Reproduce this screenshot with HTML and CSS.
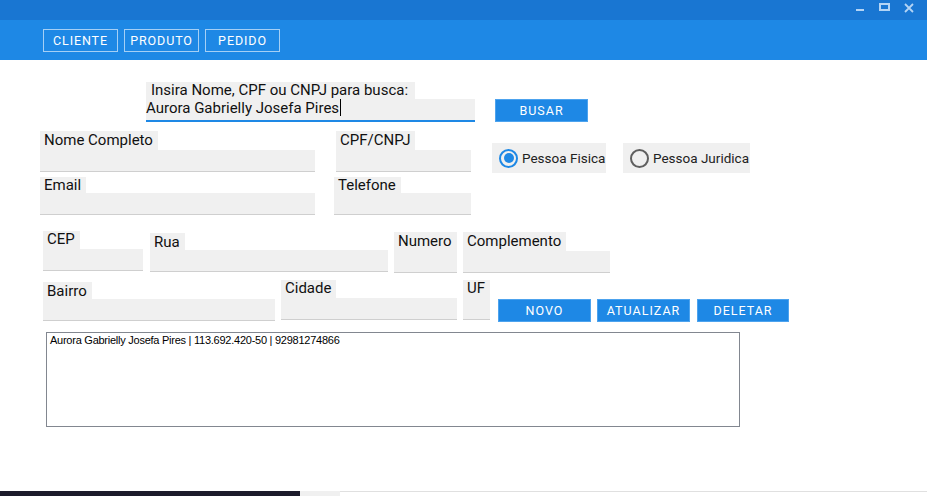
FILE: index.html
```html
<!DOCTYPE html>
<html lang="pt-BR">
<head>
<meta charset="utf-8">
<title>Cadastro de Cliente</title>
<link rel="stylesheet" href="styles.css">
</head>
<body>
<div class="window">
  <div class="titlebar">
    <span class="wc wc-min"></span>
    <span class="wc wc-max"></span>
    <svg class="wc-close" width="10" height="10" viewBox="0 0 10 10"><path d="M1 1L9 9M9 1L1 9" stroke="#b3d4f5" stroke-width="1.8" fill="none"/></svg>
  </div>
  <nav class="navbar">
    <span class="navbtn">CLIENTE</span>
    <span class="navbtn">PRODUTO</span>
    <span class="navbtn">PEDIDO</span>
  </nav>
  <main class="content">
    <div class="row row-search">
      <div class="search">
        <span class="search-lbl">Insira Nome, CPF ou CNPJ para busca:</span>
        <div class="search-input">Aurora Gabrielly Josefa Pires<span class="caret"></span></div>
      </div>
      <button class="btn btn-busar">BUSAR</button>
    </div>

    <div class="row row2">
      <div class="field w-nome"><span class="lbl h19">Nome Completo</span><div class="box"></div></div>
      <div class="field w-cpf ml21"><span class="lbl h19">CPF/CNPJ</span><div class="box"></div></div>
      <label class="radio w-fis ml21"><span class="dot on"></span>Pessoa Fisica</label>
      <label class="radio w-jur ml17"><span class="dot"></span>Pessoa Juridica</label>
    </div>

    <div class="row row3">
      <div class="field w-nome"><span class="lbl h16">Email</span><div class="box"></div></div>
      <div class="field w-tel ml19"><span class="lbl h16">Telefone</span><div class="box"></div></div>
    </div>

    <div class="row row4">
      <div class="field w-cep"><span class="lbl h18">CEP</span><div class="box"></div></div>
      <div class="field w-rua ml7 mt2"><span class="lbl h17">Rua</span><div class="box"></div></div>
      <div class="field w-num ml6 mt1"><span class="lbl h19 full">Numero</span><div class="box"></div></div>
      <div class="field w-comp ml6 mt1"><span class="lbl h19">Complemento</span><div class="box"></div></div>
    </div>

    <div class="row row5">
      <div class="field w-bairro mt2"><span class="lbl h17">Bairro</span><div class="box"></div></div>
      <div class="field w-cid ml6"><span class="lbl h18">Cidade</span><div class="box"></div></div>
      <div class="field w-uf ml6"><span class="lbl h18 full">UF</span><div class="box h22"></div></div>
      <button class="btn w-novo ml8 mt19">NOVO</button>
      <button class="btn w-novo ml6 mt19">ATUALIZAR</button>
      <button class="btn w-del ml7 mt19">DELETAR</button>
    </div>

    <div class="listbox">
      <div class="item">Aurora Gabrielly Josefa Pires | 113.692.420-50 | 92981274866</div>
    </div>
  </main>
  <div class="taskbar">
    <span class="tb-dark"></span>
    <span class="tb-mid"></span>
    <span class="tb-rest"></span>
  </div>
</div>
</body>
</html>
```
FILE: styles.css
```css
* { box-sizing: border-box; }
html, body { margin: 0; padding: 0; }
body {
  width: 927px;
  height: 496px;
  overflow: hidden;
  background: #ffffff;
  font-family: Roboto, "Liberation Sans", sans-serif;
  color: #111;
}
.window { width: 927px; height: 496px; display: flex; flex-direction: column; }

.titlebar {
  height: 20px;
  background: #1976d2;
  display: flex;
  align-items: flex-start;
  justify-content: flex-end;
  padding-right: 13px;
}
.wc { display: block; }
.wc-min { width: 8px; height: 2px; background: #b3d4f5; margin-top: 9px; }
.wc-max { width: 11px; height: 8px; border: 2px solid #b3d4f5; margin-top: 3px; margin-left: 15px; }
.wc-close { margin-top: 3px; margin-left: 14px; }

.navbar {
  height: 40px;
  background: #1e88e5;
  display: flex;
  align-items: flex-start;
  padding: 9px 0 0 43px;
  gap: 6px;
}
.navbtn {
  width: 75px;
  height: 23px;
  border: 1px solid rgba(255,255,255,0.6);
  color: #fff;
  font-size: 12.5px;
  font-weight: 400;
  letter-spacing: 0.9px;
  display: flex;
  align-items: center;
  justify-content: center;
}

.content { flex: 1; position: relative; }

.row { display: flex; align-items: flex-start; }
.row-search { padding-left: 146px; margin-top: 22px; align-items: flex-end; }
.search { width: 329px; display: flex; flex-direction: column; align-items: flex-start; }
.search-lbl {
  background: #f0f0f0;
  width: 269px;
  height: 17px;
  line-height: 17px;
  padding-left: 5px;
  font-size: 15px;
  white-space: nowrap;
}
.search-input {
  width: 329px;
  height: 23px;
  background: #f0f0f0;
  border-bottom: 2px solid #1e88e5;
  font-size: 15px;
  line-height: 19px;
  white-space: nowrap;
}
.caret { display: inline-block; width: 1px; height: 17px; background: #000; vertical-align: -3px; margin-left: 1px; }

.btn {
  height: 23px;
  background: #1e88e5;
  border: 1px solid #4da3ee;
  color: #fff;
  font-family: Roboto, "Liberation Sans", sans-serif;
  font-size: 12.5px;
  font-weight: 400;
  letter-spacing: 1px;
  padding: 0;
  display: flex;
  align-items: center;
  justify-content: center;
}
.btn-busar { width: 93px; margin-left: 20px; }
.w-novo { width: 93px; }
.w-del { width: 92px; }

.row2 { padding-left: 40px; margin-top: 9px; height: 46px; }
.row3 { padding-left: 40px; }
.row4 { padding-left: 43px; margin-top: 16px; height: 49px; }
.row5 { padding-left: 43px; }

.field { display: flex; flex-direction: column; align-items: flex-start; }
.lbl {
  display: block;
  background: #f0f0f0;
  font-size: 15px;
  padding: 0 5px 0 4px;
  white-space: nowrap;
}
.lbl.full { align-self: stretch; }
.h19 { height: 19px; line-height: 19px; }
.h18 { height: 18px; line-height: 17px; }
.h17 { height: 17px; line-height: 18px; }
.h16 { height: 16px; line-height: 16px; }
.box {
  align-self: stretch;
  height: 22px;
  background: #f0f0f0;
  border-bottom: 1px solid #cfcfcf;
}
.box.h22 { height: 22px; }

.w-nome { width: 275px; }
.w-cpf { width: 135px; }
.w-tel { width: 137px; }
.w-cep { width: 100px; }
.w-rua { width: 238px; }
.w-num { width: 63px; }
.w-comp { width: 147px; }
.w-bairro { width: 232px; }
.w-cid { width: 176px; }
.w-uf { width: 27px; }
.w-fis { width: 114px; }
.w-jur { width: 127px; }

.ml6 { margin-left: 6px; }
.ml7 { margin-left: 7px; }
.ml8 { margin-left: 8px; }
.ml17 { margin-left: 17px; }
.ml19 { margin-left: 19px; }
.ml21 { margin-left: 21px; }
.mt1 { margin-top: 1px; }
.mt2 { margin-top: 2px; }
.mt19 { margin-top: 19px; }

.radio {
  margin-top: 12px;
  height: 30px;
  background: #f0f0f0;
  display: flex;
  align-items: center;
  font-size: 13.5px;
  color: #222;
  padding-left: 7px;
  white-space: nowrap;
}
.dot {
  width: 19px;
  height: 19px;
  border-radius: 50%;
  border: 2px solid #5f5f5f;
  margin-right: 4px;
  flex: none;
  position: relative;
}
.dot.on { border-color: #1e88e5; }
.dot.on::after {
  content: "";
  position: absolute;
  left: 2.5px;
  top: 2.5px;
  width: 10px;
  height: 10px;
  border-radius: 50%;
  background: #1e88e5;
}

.listbox {
  margin: 10px 0 0 46px;
  width: 694px;
  height: 95px;
  border: 1px solid #828790;
  padding: 1px 3px;
}
.item {
  font-family: "Liberation Sans", Arial, sans-serif;
  font-size: 11px;
  letter-spacing: -0.25px;
  line-height: 13px;
  color: #000;
  white-space: nowrap;
}

.taskbar { height: 5px; display: flex; border-top: 0; }
.tb-dark { width: 300px; background: #1c1b2b; }
.tb-mid { width: 40px; background: #f0f0f0; }
.tb-rest { flex: 1; border-top: 1px solid #e0e0e0; background: #fff; }
```
